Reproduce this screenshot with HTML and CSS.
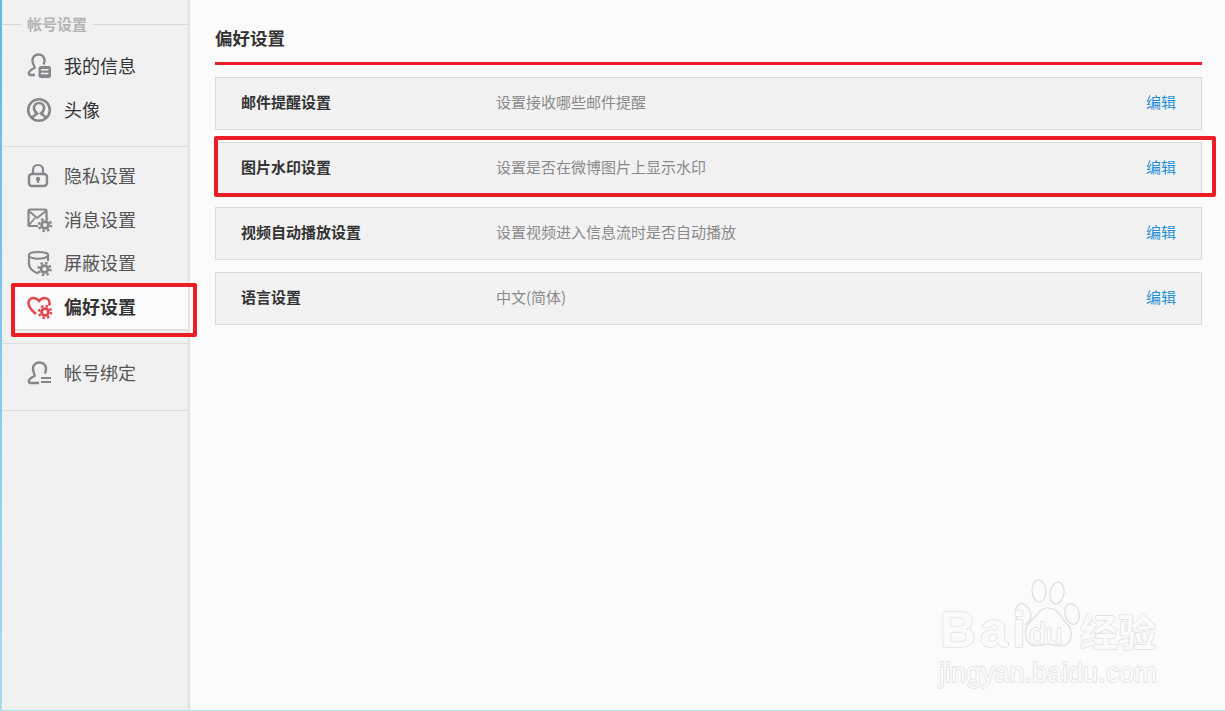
FILE: index.html
```html
<!DOCTYPE html>
<html lang="zh-CN">
<head>
<meta charset="utf-8">
<title>偏好设置</title>
<link rel="stylesheet" href="styles.css">
</head>
<body>
<div class="page">
  <aside class="sidebar">
    <div class="group-title"><span>帐号设置</span></div>
    <section class="group group-first">
      <a class="nav-item"><svg class="ico" viewBox="0 0 26 26"><path d="M8 22H4c-2 0-2.500-1-2-2.500.7-2 3.500-3.500 5.500-4.500 1-.8-2-3.500-2-7.500C5.500 4 8 1.500 11.500 1.500S17.500 4 17.500 7.500c0 1.500-.3 3-1 4" fill="none" stroke="#85878a" stroke-width="2.400"/><rect x="11.500" y="13" width="12.500" height="12" rx="2.500" fill="#85878a"/><path d="M14 16.800h7.500M14 20.500h7.500" stroke="#f1f1f1" stroke-width="1.500"/></svg><span>我的信息</span></a>
      <a class="nav-item"><svg class="ico" viewBox="0 0 26 26"><g fill="none" stroke="#85878a" stroke-width="2.600"><circle cx="12" cy="13" r="10.800"/><path d="M5 21.500c1-3 3.500-3.500 5-5-2-1.500-3-3-3-5.500 0-3 2-5 5-5s5 2 5 5c0 2.500-1 4-3 5.500 1.500 1.500 4 2 5 5"/></g></svg><span>头像</span></a>
    </section>
    <section class="group group-mid">
      <a class="nav-item"><svg class="ico" viewBox="0 0 26 26"><path d="M6 11V7c0-3 2.200-5 5-5s5 2 5 5v4" fill="none" stroke="#85878a" stroke-width="2.200"/><rect x="2" y="11" width="18" height="12" rx="3" fill="none" stroke="#85878a" stroke-width="2.400"/><circle cx="11" cy="16" r="2.200" fill="#85878a"/><path d="M11 17v3" stroke="#85878a" stroke-width="2"/></svg><span>隐私设置</span></a>
      <a class="nav-item"><svg class="ico" viewBox="0 0 26 26"><path d="M11 19H3c-1 0-1.500-.5-1.500-1.500V4c0-1 .5-1.500 1.500-1.500h15c1 0 1.500.5 1.500 1.500v7" fill="none" stroke="#85878a" stroke-width="2.200"/><path d="M2 4l8 7 9-7M2 18l6-7" fill="none" stroke="#85878a" stroke-width="1.800"/><circle cx="18" cy="18" r="4.800" fill="#85878a"/><circle cx="18" cy="18" r="6" fill="none" stroke="#85878a" stroke-width="2.400" stroke-dasharray="2.400 2.300"/><circle cx="18" cy="18" r="2" fill="#f1f1f1"/></svg><span>消息设置</span></a>
      <a class="nav-item"><svg class="ico" viewBox="0 0 26 26"><path d="M11 23.500C5 21 2 18 2 14V5c0-2 3-3 9-3s10 1 10 3v6" fill="none" stroke="#85878a" stroke-width="2.200"/><path d="M2 6c2 3.500 16 3.500 19 0" fill="none" stroke="#85878a" stroke-width="2"/><circle cx="17.500" cy="19" r="4.800" fill="#85878a"/><circle cx="17.500" cy="19" r="6" fill="none" stroke="#85878a" stroke-width="2.400" stroke-dasharray="2.400 2.300"/><circle cx="17.500" cy="19" r="2" fill="#f1f1f1"/></svg><span>屏蔽设置</span></a>
      <a class="nav-item nav-active"><svg class="ico" viewBox="0 0 26 26"><path d="M9 20C4 16 1.500 13 1.500 9c0-3 2-5 5-5 2.500 0 4 1 5.500 3 1.500-2 3-3 5.500-3 3 0 5 2 5 5 0 .8 0 1.500-.3 2.500" fill="none" stroke="#e4474d" stroke-width="2.500"/><circle cx="18" cy="18" r="4.800" fill="#e4474d"/><circle cx="18" cy="18" r="6" fill="none" stroke="#e4474d" stroke-width="2.400" stroke-dasharray="2.400 2.300"/><circle cx="18" cy="18" r="2" fill="#fbfbfb"/></svg><span>偏好设置</span></a>
    </section>
    <section class="group group-last">
      <a class="nav-item"><svg class="ico" viewBox="0 0 26 26"><path d="M12 23H4c-2 0-2.500-1-2-2.500.7-2 3.500-3.500 5.500-4.500 1-.8-1.500-3.500-1.500-7.500C6 5 9 2.500 12.500 2.500S19 5 19 8.500c0 1.500-.3 3-1.200 5" fill="none" stroke="#85878a" stroke-width="2.400"/><path d="M14 18h10M14 22h10" stroke="#85878a" stroke-width="2.200"/></svg><span>帐号绑定</span></a>
    </section>
  </aside>
  <main class="content">
    <h1 class="title">偏好设置</h1>
    <div class="rows">
      <div class="row"><span class="row-name">邮件提醒设置</span><span class="row-desc">设置接收哪些邮件提醒</span><a class="row-edit">编辑</a></div>
      <div class="row"><span class="row-name">图片水印设置</span><span class="row-desc">设置是否在微博图片上显示水印</span><a class="row-edit">编辑</a></div>
      <div class="row"><span class="row-name">视频自动播放设置</span><span class="row-desc">设置视频进入信息流时是否自动播放</span><a class="row-edit">编辑</a></div>
      <div class="row"><span class="row-name">语言设置</span><span class="row-desc">中文(简体)</span><a class="row-edit">编辑</a></div>
    </div>
  </main>
</div>
<div class="mark mark-side"></div>
<div class="mark mark-row"></div>
<div class="watermark">
  <svg class="paw" viewBox="0 0 70 72"><g fill="#fbfbfb" stroke="#dedede" stroke-width="1.200"><ellipse cx="11" cy="36" rx="7.500" ry="10.500" transform="rotate(-15 11 36)"/><ellipse cx="27" cy="13" rx="7" ry="11" transform="rotate(-5 27 13)"/><ellipse cx="45" cy="15" rx="7" ry="11" transform="rotate(10 45 15)"/><ellipse cx="60" cy="36" rx="7" ry="10.500" transform="rotate(-15 60 36)"/><path d="M35 30c-8 0-10 9-17 14-7 5-7 24 7 24 5 0 6-2 10-2 6 0 8 2 13 2 13 0 14-15 7-22-6-5-7-16-20-16z"/></g></svg>
  <span class="wm-bai">Bai</span><span class="wm-du">du</span><span class="wm-cn">经验</span>
  <span class="wm-url">jingyan.baidu.com</span>
</div>
</body>
</html>
```
FILE: styles.css
```css
* { box-sizing: border-box; }
html, body { margin: 0; height: 100%; overflow: hidden; }
body {
  background: #fbfbfb;
  font-family: "Noto Sans CJK SC", "Liberation Sans", sans-serif;
  color: #333;
}
.page {
  display: flex;
  height: 711px;
  border-bottom: 1px solid #b5e2f3;
}
.sidebar {
  width: 190px;
  flex: none;
  background:
    linear-gradient(180deg, #5db8ea, #a9d9f1) left top / 2px 100% no-repeat,
    linear-gradient(90deg, #f1f1f1, #dfdfdf) right top / 4px 100% no-repeat,
    #f1f1f1;
  padding: 14px 2px 0;
}
.group-title {
  display: flex;
  align-items: center;
  height: 20px;
  font-size: 15px;
  font-weight: 700;
  color: #b4b4b4;
}
.group-title span { margin-bottom: 2px; }
.group-title::before { content: ""; width: 19px; height: 1px; background: #d6d6d6; margin-right: 6px; }
.group-title::after { content: ""; flex: 1; height: 1px; background: #d6d6d6; margin-left: 6px; }
.group { border-bottom: 1px solid #dcdcdc; }
.group-first { padding: 10.500px 0 0; height: 113px; }
.group-mid { padding: 7.500px 0 0; height: 197px; }
.group-last { padding: 7px 0 0; height: 67px; }
.nav-item {
  display: flex;
  align-items: center;
  height: 43.500px;
  padding-left: 25px;
  font-size: 18px;
  color: #555;
}
.nav-item span { margin-bottom: 2px; }
.group-first .nav-item { color: #333; }
.ico { width: 26px; height: 26px; margin-right: 11px; flex: none; }
.nav-active {
  margin-left: 10px;
  padding-left: 15px;
  height: 46px;
  background: #fbfbfb;
  border-bottom: 2px solid #e2e2e2;
  color: #333;
  font-weight: 700;
}
.content { flex: 1; padding: 18px 23px 0 25px; }
.title {
  margin: 0;
  height: 47px;
  border-bottom: 3px solid #ef1c2a;
  font-size: 17.500px;
  line-height: 40px;
  font-weight: 700;
  color: #333;
}
.rows { display: flex; flex-direction: column; gap: 12px; margin-top: 12px; }
.row {
  display: flex;
  align-items: center;
  height: 53px;
  padding: 0 25px 4px;
  background: #f2f2f2;
  border: 1px solid #dadada;
  font-size: 15px;
}
.row-name { width: 255px; font-weight: 700; color: #333; }
.row-desc { flex: 1; color: #8a8a8a; }
.row-edit { color: #1f8fd6; }
.mark { position: absolute; border: 4px solid #ee1c25; border-radius: 2px; }
.mark-side { left: 11px; top: 283px; width: 186px; height: 54px; }
.mark-row { left: 214px; top: 136px; width: 1002px; height: 61px; }
.watermark { position: absolute; left: 936px; top: 578px; width: 240px; height: 110px; color: #fbfbfb; font-family: "Liberation Sans", sans-serif; }
.paw { position: absolute; left: 76px; top: 0; width: 70px; height: 72px; }
.wm-bai, .wm-du, .wm-cn, .wm-url {
  position: absolute;
  -webkit-text-stroke: 1px #d8d8d8;
  paint-order: stroke fill;
  text-shadow: 0 0 2px #e2e2e2;
  white-space: nowrap;
}
.wm-bai { left: 4px; top: 26px; font-size: 50px; font-weight: 700; letter-spacing: 4px; line-height: 52px; }
.wm-du { left: 93px; top: 41px; font-size: 30px; line-height: 30px; }
.wm-cn { left: 144px; top: 30px; font-size: 38px; font-weight: 700; line-height: 44px; letter-spacing: 0; font-family: "Noto Sans CJK SC", sans-serif; }
.wm-url { left: 3px; top: 80px; font-size: 27px; line-height: 30px; }
```
